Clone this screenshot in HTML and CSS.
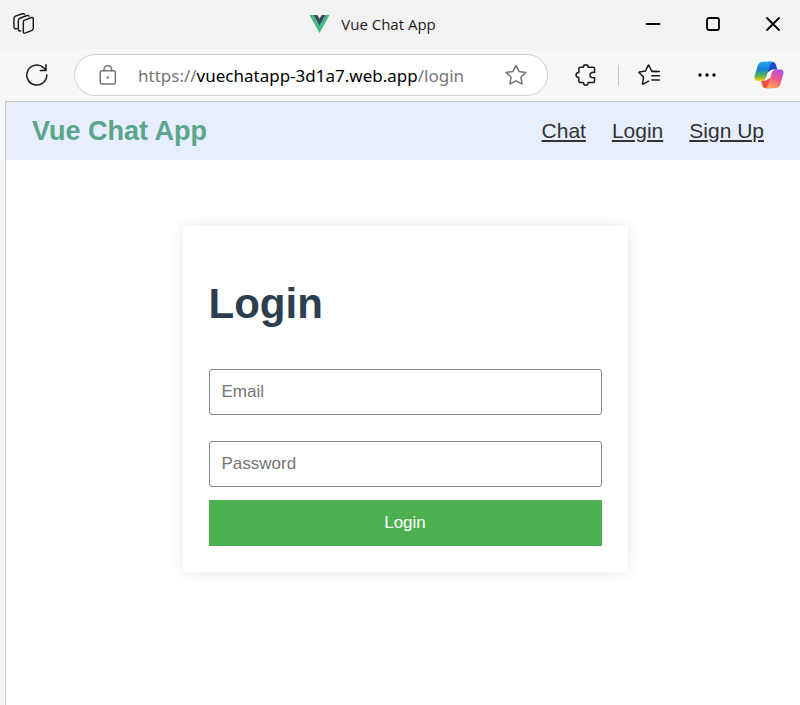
FILE: index.html
```html
<!DOCTYPE html>
<html lang="en">
<head>
  <meta charset="UTF-8" />
  <meta name="viewport" content="width=device-width, initial-scale=1.0"/>
  <title>Vue Chat App</title>
  <link rel="stylesheet" href="styles.css">
</head>
<body>
  <div class="titlebar">
    <button type="button" class="icon-btn workspaces" aria-label="Tab actions">
      <svg width="22" height="22" viewBox="0 0 23 22" class="line">
        <path d="M11.5 7.2 L19.5 4.2 Q21.2 3.8 21.2 5.5 V15.5 Q21.2 17 19.9 17.6 L13.2 20.3 Q10.8 21.2 10.8 19 V9.4 Q10.8 7.8 11.5 7.2 Z"/>
        <path d="M8.2 18.2 Q5.6 18.8 5.6 16.6 V7.4 Q5.6 5.7 7.2 5 L14.6 2.1 Q16.3 1.7 16.8 2.8"/>
        <path d="M4.2 15.8 Q1 16.4 1 14.2 V5 Q1 3.3 2.6 2.7 L9.8 .3 Q11.5 0 12 .9"/>
      </svg>
    </button>
    <div class="tab">
      <svg width="21" height="18" viewBox="0 0 20 18">
        <path fill="#42b883" d="M0 0 H4 L10 10.4 L16 0 H20 L10 18 Z"/>
        <path fill="#35495e" d="M4 0 H7.8 L10 3.8 L12.2 0 H16 L10 10.6 Z"/>
      </svg>
      <span>Vue Chat App</span>
    </div>
    <div class="window-controls">
      <button type="button" class="icon-btn" aria-label="Minimize">
        <svg width="14" height="14" viewBox="0 0 14 14" class="line heavy"><path d="M.5 7 H13.5"/></svg>
      </button>
      <button type="button" class="icon-btn" aria-label="Maximize">
        <svg width="14" height="14" viewBox="0 0 14 14" class="line heavy"><rect x="1" y="1" width="12" height="12" rx="2"/></svg>
      </button>
      <button type="button" class="icon-btn" aria-label="Close">
        <svg width="14" height="14" viewBox="0 0 14 14" class="line heavy"><path d="M1 1 L13 13 M13 1 L1 13"/></svg>
      </button>
    </div>
  </div>

  <div class="toolbar">
    <button type="button" class="icon-btn" aria-label="Refresh">
      <svg width="22" height="22" viewBox="0 0 22 22" class="line">
        <path d="M20.8 11 A10 10 0 1 1 17.5 3.6 L20 6.2 M20 .8 V6.4 H14.3"/>
      </svg>
    </button>
    <div class="address">
      <svg width="18" height="20" viewBox="0 0 18 20" class="line muted">
        <rect x="1.2" y="5.8" width="15.2" height="13.2" rx="2"/>
        <path d="M5 5.8 V4.5 A3.8 3.8 0 0 1 12.6 4.5 V5.8"/>
        <circle class="dot" cx="8.8" cy="12.4" r="1.2"/>
      </svg>
      <div class="url">https://<span>vuechatapp-3d1a7.web.app</span>/login</div>
      <button type="button" class="icon-btn star" aria-label="Add this page to favorites">
        <svg width="22" height="22" viewBox="0 0 22 22" class="line muted">
          <path d="M11 1.3 L14 7.4 L20.9 8.4 L15.9 13.2 L17.1 20 L11 16.8 L4.9 20 L6.1 13.2 L1.1 8.4 L8 7.4 Z"/>
        </svg>
      </button>
    </div>
    <button type="button" class="icon-btn extensions" aria-label="Extensions">
      <svg width="22" height="22" viewBox="0 0 22 22" class="line">
        <path d="M5.6 3.2 H8.4 C8.4 -.2 13.2 -.2 13.2 3.2 H17.8 Q19.6 3.2 19.6 5 V8.2 H18.6 C13.8 8.2 13.8 13.8 18.6 13.8 H19.6 V16.8 Q19.6 18.6 17.8 18.6 H13.2 C13.2 22.2 8.4 22.2 8.4 18.6 H5.6 Q3.8 18.6 3.8 16.8 V13.4 C.2 13.4 .2 8.6 3.8 8.6 V5 Q3.8 3.2 5.6 3.2 Z"/>
      </svg>
    </button>
    <span class="divider"></span>
    <button type="button" class="icon-btn" aria-label="Favorites">
      <svg width="22" height="22" viewBox="0 0 22 22" class="line">
        <path d="M18.8 7.6 L13.7 7.2 L10.9 1.2 Q10.6 .7 10.3 1.2 L7.5 7 L1.3 8.1 Q.7 8.3 1.1 8.8 L5.6 13 L4.5 19.8 Q4.6 20.5 5.2 20.2 L10.7 17.2"/>
        <path d="M13.8 7.6 H21.4 M13.8 11.8 H21.4 M13.8 16 H21.4"/>
      </svg>
    </button>
    <button type="button" class="icon-btn more" aria-label="Settings and more">
      <svg width="18" height="4" viewBox="0 0 18 4">
        <circle cx="2" cy="2" r="1.7"/><circle cx="9" cy="2" r="1.7"/><circle cx="16" cy="2" r="1.7"/>
      </svg>
    </button>
    <button type="button" class="icon-btn copilot" aria-label="Copilot">
      <svg width="30" height="28" viewBox="0 0 30 28">
        <defs>
          <linearGradient id="cool" x1="0" y1="0" x2="0" y2="1">
            <stop offset="0" stop-color="#1ba4ef"/>
            <stop offset=".4" stop-color="#1782d2"/>
            <stop offset=".7" stop-color="#4fae5c"/>
            <stop offset="1" stop-color="#f4cf0b"/>
          </linearGradient>
          <linearGradient id="warm" x1=".8" y1="0" x2=".4" y2="1">
            <stop offset="0" stop-color="#a84de8"/>
            <stop offset=".5" stop-color="#ee5791"/>
            <stop offset="1" stop-color="#ffa255"/>
          </linearGradient>
        </defs>
        <path fill="#1c49cf" d="M14 .7 H18 Q21 .7 22 4 L23.3 8.4 H19 Q17 8.4 15.6 10 L13.4 12 Z"/>
        <path fill="#ee5340" d="M16 27.3 H12 Q9 27.3 8.2 24 L7 19.8 H10.4 Q12.6 19.8 14.2 18 L16.4 16.4 Z"/>
        <path fill="url(#cool)" d="M9 .7 H19 Q16.8 1.3 15.8 4.6 L12.3 16 Q11.2 19.8 7.6 19.8 H4 Q-.5 19.8 .7 14.8 L3.6 5 Q5 .7 9 .7 Z"/>
        <path fill="url(#warm)" d="M22.4 8.4 H26 Q30.5 8.4 29.3 13.2 L26.4 23 Q25 27.3 21 27.3 H11.5 Q13.4 26.6 14.3 23.4 L17.7 12 Q18.8 8.4 22.4 8.4 Z"/>
      </svg>
    </button>
  </div>

  <div class="page">
    <nav class="navbar">
      <div class="brand">Vue Chat App</div>
      <div class="links">
        <a href="#chat">Chat</a>
        <a href="#login">Login</a>
        <a href="#signup">Sign Up</a>
      </div>
    </nav>
    <main class="content">
      <form class="login-form">
        <h1>Login</h1>
        <input type="email" name="email" placeholder="Email" aria-label="Email" required>
        <input type="password" name="password" placeholder="Password" aria-label="Password" required>
        <button type="submit" class="submit">Login</button>
      </form>
    </main>
  </div>
</body>
</html>
```
FILE: styles.css
```css
* {
  box-sizing: border-box;
}

body {
  margin: 0;
  min-height: 100vh;
  display: flex;
  flex-direction: column;
  background-color: #f7f7f7;
  font-family: "Liberation Sans", Arial, sans-serif;
}

button {
  font-family: inherit;
  border: none;
  cursor: pointer;
}

/* browser window */
.titlebar {
  display: flex;
  align-items: center;
  height: 49px;
  padding: 0 7px 2px 4px;
  background-color: #f2f2f2;
}

.icon-btn {
  display: flex;
  align-items: center;
  justify-content: center;
  flex: none;
  width: 40px;
  height: 36px;
  padding: 0;
  background: none;
}

.line {
  fill: none;
  stroke: #1b1b1b;
  stroke-width: 1.5;
  stroke-linecap: round;
  stroke-linejoin: round;
  overflow: visible;
}

.heavy {
  stroke: #000;
  stroke-width: 1.8;
}

.muted {
  stroke: #767676;
}

.dot {
  fill: #767676;
  stroke: none;
}

.tab {
  display: flex;
  flex: 1;
  align-items: center;
  justify-content: center;
  gap: 11px;
  padding-left: 68px;
  font-family: "Open Sans", sans-serif;
  font-size: 15px;
  color: #1b1b1b;
}

.window-controls {
  display: flex;
  gap: 20px;
}

.toolbar {
  display: flex;
  align-items: center;
  gap: 10px;
  height: 52px;
  padding: 0 11px 0 17px;
}

.address {
  display: flex;
  flex: 1;
  align-items: center;
  height: 42px;
  margin: 0 8px 0 7px;
  padding: 0 11px 0 24px;
  background-color: #fff;
  border: 1px solid #d0d0d0;
  border-radius: 21px;
}

.url {
  flex: 1;
  padding-left: 21px;
  font-family: "Noto Sans", sans-serif;
  font-size: 17px;
  white-space: nowrap;
  color: #767676;
}

.url span {
  color: #000;
}

.extensions {
  margin-right: 2px;
}

.divider {
  width: 1px;
  height: 21px;
  background-color: #c8c8c8;
}

.more {
  margin-left: 8px;
}

.copilot {
  margin-left: 12px;
}

/* web page */
.page {
  flex: 1;
  margin-left: 5px;
  background-color: #fff;
  border-top: 1px solid #c4c7cc;
  border-left: 1px solid #c8c8c8;
}

.navbar {
  display: flex;
  align-items: center;
  justify-content: space-between;
  height: 58px;
  padding: 0 36px 0 26px;
  background-color: #e6eeff;
}

.brand {
  font-size: 27px;
  font-weight: bold;
  color: #5ba58a;
}

.links {
  display: flex;
  gap: 26px;
}

.links a {
  font-size: 21px;
  color: #333;
}

.content {
  padding: 66px 20px 40px 24px;
}

.login-form {
  display: flex;
  flex-direction: column;
  max-width: 445px;
  margin: 0 auto;
  padding: 26px;
  background-color: #fff;
  box-shadow: 0 0 13px rgba(0, 0, 0, 0.1);
}

h1 {
  margin: 28px 0 41px;
  font-size: 42px;
  line-height: 48px;
  color: #2c3e50;
}

input {
  width: 100%;
  height: 46px;
  margin-bottom: 26px;
  padding: 0 12px;
  border: 1px solid #858585;
  border-radius: 3px;
  font-family: inherit;
  font-size: 17px;
}

input::placeholder {
  color: #757575;
}

input[type="password"] {
  margin-bottom: 13px;
}

.submit {
  height: 46px;
  background-color: #4caf50;
  color: white;
  font-size: 17px;
}
```
